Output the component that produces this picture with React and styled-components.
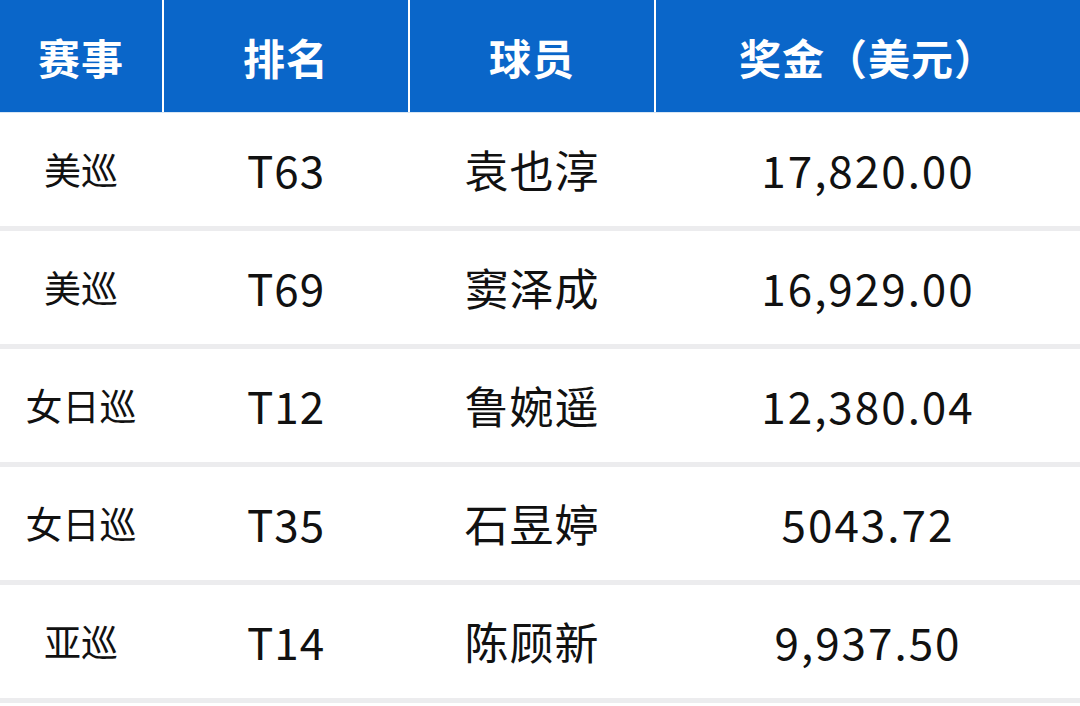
import React from "react";
import styled, { createGlobalStyle } from "styled-components";

const rows = [
  { tour: "美巡", rank: "T63", player: "袁也淳", prize: "17,820.00" },
  { tour: "美巡", rank: "T69", player: "窦泽成", prize: "16,929.00" },
  { tour: "女日巡", rank: "T12", player: "鲁婉遥", prize: "12,380.04" },
  { tour: "女日巡", rank: "T35", player: "石昱婷", prize: "5043.72" },
  { tour: "亚巡", rank: "T14", player: "陈顾新", prize: "9,937.50" },
];

const headers = ["赛事", "排名", "球员", "奖金（美元）"];

export default function App() {
  return (
    <>
      <GlobalStyle />
      <Table>
        <HeaderRow>
          {headers.map((h) => (
            <HeaderCell key={h}>{h}</HeaderCell>
          ))}
        </HeaderRow>
        {rows.map((r, i) => (
          <Row key={i}>
            <Cell small>{r.tour}</Cell>
            <Cell>{r.rank}</Cell>
            <Cell>{r.player}</Cell>
            <Cell wide>{r.prize}</Cell>
          </Row>
        ))}
      </Table>
    </>
  );
}

const GlobalStyle = createGlobalStyle`
  body {
    margin: 0;
    background: #fff;
    font-family: "Noto Sans CJK SC", "Noto Sans", sans-serif;
  }
`;

const Table = styled.div`
  width: 1080px;
  height: 706px;
  overflow: hidden;
  background: #fff;
`;

const columns = "162px 244px 244px 1fr";

const HeaderRow = styled.div`
  display: grid;
  grid-template-columns: ${columns};
  column-gap: 2px;
  height: 113px;
  background: #fff;
  border-bottom: 1px solid #d8e6f4;
  box-sizing: border-box;
`;

const HeaderCell = styled.div`
  display: flex;
  align-items: center;
  justify-content: center;
  background: #0a66c9;
  color: #fff;
  font-size: 42px;
  font-weight: 700;
  letter-spacing: 1px;
`;

const Row = styled.div`
  display: grid;
  grid-template-columns: ${columns};
  column-gap: 2px;
  height: 118px;
  border-bottom: 5px solid #ececee;
  box-sizing: border-box;
`;

const Cell = styled.div`
  display: flex;
  align-items: center;
  justify-content: center;
  color: #111;
  font-size: ${({ small }) => (small ? "37px" : "44px")};
  font-weight: 400;
  letter-spacing: ${({ small, wide }) => (small ? "0" : wide ? "2px" : "1px")};
  padding-bottom: 2px;
`;
